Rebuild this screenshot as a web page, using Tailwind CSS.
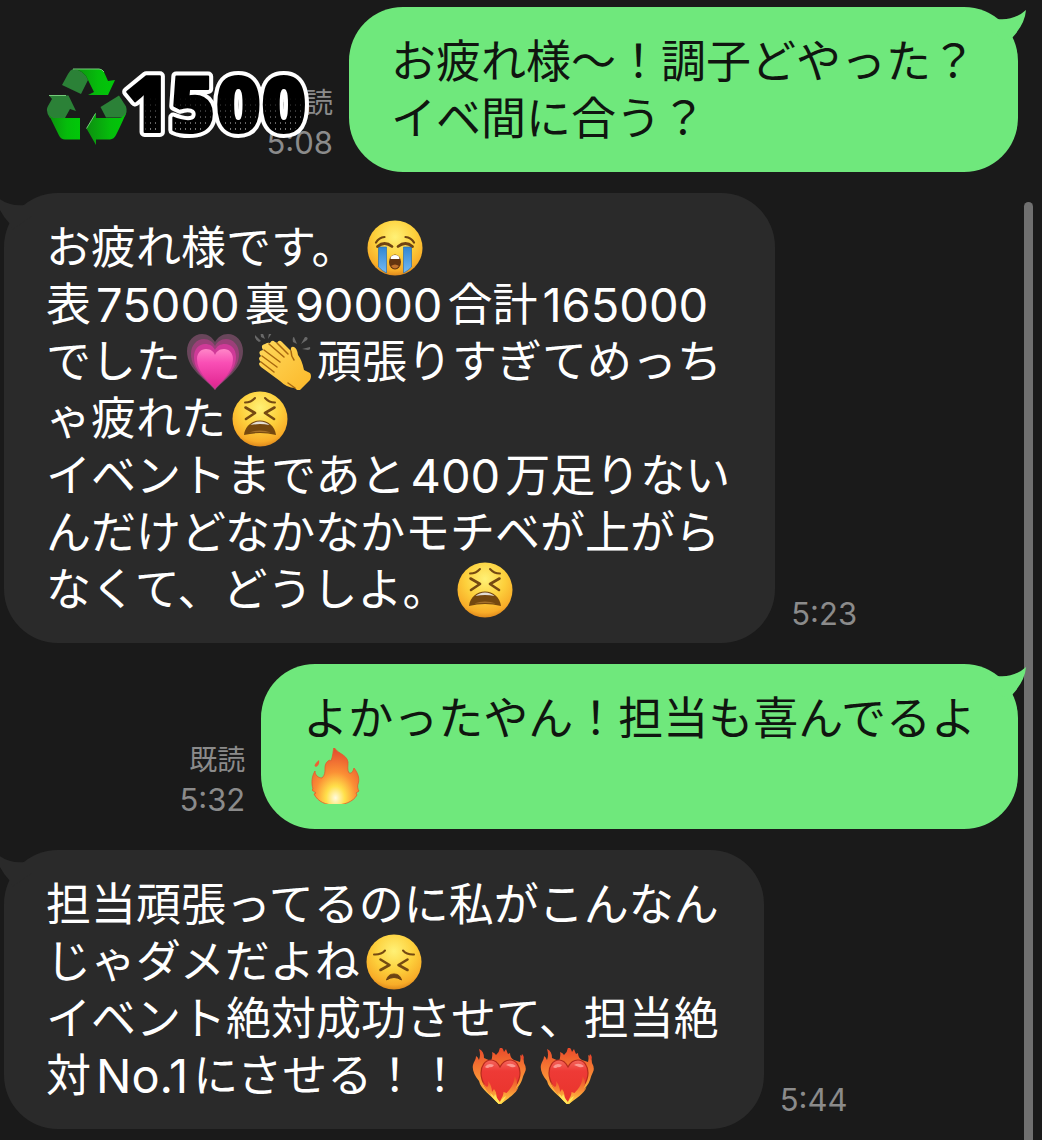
<!DOCTYPE html>
<html lang="ja">
<head>
    <meta charset="UTF-8">
    <meta name="viewport" content="width=device-width, initial-scale=1.0">
    <title>トーク</title>
    <script src="https://cdn.jsdelivr.net/npm/@tailwindcss/browser@4"></script>
</head>
<body class="bg-[#1a1a1a] font-['Inter','Noto_Sans_CJK_JP',sans-serif] overflow-x-hidden">

    <!-- Shared shapes -->
    <svg class="absolute w-0 h-0" aria-hidden="true">
        <defs>
            <radialGradient id="face" cx="50%" cy="30%" r="72%">
                <stop offset="0" stop-color="#fff176"/>
                <stop offset=".5" stop-color="#fdd03c"/>
                <stop offset=".85" stop-color="#f8ac28"/>
                <stop offset="1" stop-color="#d9821a"/>
            </radialGradient>
            <linearGradient id="tear" x1="0" y1="0" x2="0" y2="1">
                <stop offset="0" stop-color="#2f86d2"/>
                <stop offset="1" stop-color="#74b9f2"/>
            </linearGradient>
            <linearGradient id="pink" x1="0" y1="0" x2="0" y2="1">
                <stop offset="0" stop-color="#ff86c8"/>
                <stop offset=".35" stop-color="#f94fb5"/>
                <stop offset="1" stop-color="#e0248f"/>
            </linearGradient>
            <linearGradient id="hand" x1="0" y1="0" x2="1" y2="1">
                <stop offset="0" stop-color="#ffd95c"/>
                <stop offset="1" stop-color="#fbb829"/>
            </linearGradient>
            <radialGradient id="flame" cx="50%" cy="88%" r="80%">
                <stop offset="0" stop-color="#fffbe0"/>
                <stop offset=".25" stop-color="#ffe04a"/>
                <stop offset=".55" stop-color="#fb8f35"/>
                <stop offset="1" stop-color="#e5502f"/>
            </radialGradient>
            <linearGradient id="blaze" x1="0" y1="0" x2="0" y2="1">
                <stop offset="0" stop-color="#e8452a"/>
                <stop offset=".5" stop-color="#f98a35"/>
                <stop offset="1" stop-color="#ffdc45"/>
            </linearGradient>
            <linearGradient id="red" x1="0" y1="0" x2="0" y2="1">
                <stop offset="0" stop-color="#f4665c"/>
                <stop offset=".25" stop-color="#ee3a36"/>
                <stop offset="1" stop-color="#e8332b"/>
            </linearGradient>
            <linearGradient id="leaf" x1="0" y1="0" x2="1" y2="0">
                <stop offset="0" stop-color="#0d8f10"/>
                <stop offset=".6" stop-color="#05bd0b"/>
                <stop offset="1" stop-color="#00c808"/>
            </linearGradient>
            <pattern id="dots" width="5" height="6" patternUnits="userSpaceOnUse">
                <rect width="5" height="6" fill="#000"/>
                <rect x="2" y="2" width="1" height="2" fill="#777"/>
            </pattern>
            <linearGradient id="fade" x1="0" y1="0" x2="0" y2="1">
                <stop offset=".45" stop-color="#000"/>
                <stop offset=".75" stop-color="#000" stop-opacity="0"/>
            </linearGradient>

            <symbol id="cry" viewBox="0 0 56 56">
                <circle cx="28" cy="28" r="27.5" fill="url(#face)"/>
                <path d="M11.5 27h8v26a27 27 0 0 1-8-6zM36.5 27h8v20a27 27 0 0 1-8 6z" fill="url(#tear)" stroke="#2b70b0" stroke-width=".7"/>
                <g fill="none" stroke="#6f4412" stroke-width="2.2" stroke-linecap="round">
                    <path d="M9 22.5q3-5 8.500-5.500M47 22.500q-3-5-8.500-5.500"/>
                    <path d="M10.500 26.500q7-6 14.500 0M31 26.500q7.500-6 14.500 0" stroke-width="2.800"/>
                </g>
                <ellipse cx="28" cy="42" rx="6" ry="7.500" fill="#63340f"/>
                <path d="M23.500 39q0-4 4.500-4t4.500 4z" fill="#fff"/>
                <path d="M24 46q4-3 8 0-4 5-8 0z" fill="#c2722c"/>
            </symbol>

            <symbol id="tired" viewBox="0 0 56 56">
                <circle cx="28" cy="28" r="27.500" fill="url(#face)"/>
                <g fill="none" stroke="#754a12" stroke-width="2" stroke-linecap="round">
                    <path d="M13 11.500q6 0 10-4.500M43 11.500q-6 0-10-4.500"/>
                    <path d="M13.500 16.500l9.500 5.500-9 6M42.500 16.500l-9.500 5.500 9 6" stroke-width="2.600" stroke-linejoin="round"/>
                </g>
                <path d="M12 44c1-9 8-14.500 16-14.500s15 5.500 16 14.500q-16-4-32 0z" fill="#75480f"/>
                <path d="M18.500 34q4-3.500 9.500-3.500t9.500 3.500q-9.500-2-19 0z" fill="#e3ddd4"/>
                <path d="M17 41.500q11-4 22 0-11-1-22 0z" fill="#a5702a"/>
            </symbol>

            <symbol id="persevere" viewBox="0 0 56 56">
                <circle cx="28" cy="28" r="27.500" fill="url(#face)"/>
                <g fill="none" stroke="#754a12" stroke-width="2" stroke-linecap="round">
                    <path d="M8 20.500q7 .5 11-4M48 20.500q-7 .5-11-4"/>
                    <path d="M14.500 25.500l9 5.500-9 5M41.500 25.500l-9 5.500 9 5" stroke-width="2.600" stroke-linejoin="round"/>
                </g>
                <path d="M20.500 46q1.500-6 7.500-6t7.500 6q-7.500-5-15 0z" fill="#6d4213" stroke="#6d4213" stroke-linejoin="round"/>
            </symbol>

            <symbol id="heart" viewBox="0 0 56 56" overflow="visible">
                <path d="M28 56C20 46 0 36 0 17 0 7 7 0 15 0c6 0 10 3 13 8 3-5 7-8 13-8 8 0 15 7 15 17 0 19-20 29-28 39z" fill="#69465b"/>
                <path d="M28 56C20 46 4 36 4 20 4 11 10 5 17 5c5 0 9 3 11 7 2-4 6-7 11-7 7 0 13 6 13 15 0 16-16 26-24 36z" fill="#9c3f79"/>
                <path d="M28 55C20 46 7 37 7 23c0-8 5-13 11-13 5 0 8 2 10 6 2-4 5-6 10-6 6 0 11 5 11 13 0 14-13 23-21 32z" fill="#cf3a98"/>
                <path d="M28 54C21 46 10 38 10 25c0-6 4-10 9-10s8 3 9 6c1-3 4-6 9-6s9 4 9 10c0 13-11 21-18 29z" fill="url(#pink)"/>
            </symbol>

            <symbol id="clap" viewBox="0 0 56 56" overflow="visible">
                <g fill="#696969">
                    <path d="M7-3l3 8-4-2q-1-5 1-6zM0 1l6 6-2 1q-5-3-4-7zM17-1l-4 6 1-6q2-2 3 0zM39 3l3 7-4-2q-1-5 1-5zM50 3q4 0 2 3l-6 4zM55 13q1 3-2 3l-6-1z"/>
                </g>
                <path d="M15 9q2-4 5-1l2 1q2-4 5-1l9 9q-1-5 3-4 3 1 4 8 4 5 6 15l6 3q2 3 0 7l-10 10q-3 1-5-2-8 0-15-7L6 33q-4-4 0-5-4-4 0-6-4-5 2-6-3-5 2-6 3-2 5-1z" fill="url(#hand)"/>
                <path d="M6 28l13 10M7 22l15 11M9 16l16 12M14 10l15 13M22 9l11 11M36 17q0 5 3 9M33 49l7 5" fill="none" stroke="#a9680f" stroke-width="1.500" stroke-linecap="round"/>
            </symbol>

            <symbol id="fire" viewBox="0 0 56 56" overflow="visible">
                <path d="M10 12q1 5-3 7-4-1 3-7z" fill="#ee5f32"/>
                <path d="M25-2c1 7 13 8 14 16 0 4-1 8 1 11 3 1 4-2 5-5 4 5 6 11 4 16-1 2 0 6 1 7l-3 2 1 2C44 54 35 57 26 57S9 54 5 46l2-1-4-3 1-1C2 34 3 28 6 23c0 4 3 7 7 7 6-6 0-12 6-17 1-1 2-1 3 0 2-5 2-10 3-15z" fill="url(#flame)" stroke="#e35a2c" stroke-width=".8"/>
            </symbol>

            <symbol id="burning" viewBox="0 0 56 56" overflow="visible">
                <path d="M28 57C20 48 9 42 7 33 2 27 0 21 1 17c1-4 3-5 3-9q2 1 3 4 2-5 0-11 5 2 5 9l7 3q2-5 1-9 3 1 4 3 4-3 4-9 3 2 4 6l2-3q1 3 2 5l2-1q0 5 4 7l6 2q1-4 0-7 4 2 4 8 3 5 1 9-2 4-3 8c-3 9-14 17-22 25z" fill="url(#blaze)"/>
                <path d="M27.500 56C21 47 9 38 9 25c0-7 4-13 10-13 5 0 7 3 9 7 2-4 5-7 10-7 6 0 10 6 10 13 0 13-13 22-20.500 31z" fill="url(#red)" stroke="#b72a1d" stroke-width="1.200"/>
                <path d="M13 19q3-5 9-2-2 3-4 2-3 2-5 0zM34 17q5-3 10 1-2 2-5 1z" fill="#ffb0a8" opacity=".75"/>
                <path d="M27.500 57C21 50 13 43 11 34q2 4 4 5 2-1 1-6 4 5 4 11l2-3q4 5 2 10 3 1 4 3zM27.500 57c0-5 4-8 4-13l3 1c5-5 8-10 8-17 4 5 2 11 1 14l3-3c-2 7-13 13-19 18z" fill="url(#blaze)"/>
                <path d="M27 56q-7-6-9-11 3 2 4 4l1-3q2 4 5 9 1-4 6-7-2 5-7 8z" fill="#ffe65a"/>
                <path d="M50 6q3 3 1 6-3-2-1-6z" fill="#ec4a2d"/>
            </symbol>

            <!-- Bubble tail, pointing up and to the right -->
            <symbol id="tail" viewBox="0 0 36 36">
                <path d="M0 8l7 1Q24 11 36 0 35 14 22 28L20 34 0 20z" fill="currentColor"/>
            </symbol>
        </defs>
    </svg>

    <main class="relative min-h-screen pt-[7px] pb-[11px]">
        <ol class="flex flex-col gap-[21px]">

            <li class="flex justify-end items-end gap-4 pr-6">
                <div class="pb-[10px] text-right text-[#8b8b8b] leading-[39px]">
                    <div class="text-[28px]">既読</div>
                    <time class="block text-[31px]">5:08</time>
                </div>
                <div class="relative bg-[#6fe87c] text-[#101510] rounded-[54px] pt-[26px] pb-[25px] px-[42px] text-[45px] leading-[57px] whitespace-nowrap">
                    <svg class="absolute -right-2 top-[3px] size-9 text-[#6fe87c]"><use href="#tail"/></svg>
                    <p>お疲れ様〜！調子どやった？</p>
                    <p>イベ間に合う？</p>
                </div>
            </li>

            <li class="flex items-end gap-4 pl-1">
                <div class="relative bg-[#2a2a2a] text-white rounded-[54px] pt-[26px] pb-[25px] pl-[42px] pr-[45px] text-[45px] leading-[57px] whitespace-nowrap">
                    <svg class="absolute -left-2 top-[3px] size-9 -scale-x-100 text-[#2a2a2a]"><use href="#tail"/></svg>
                    <p class="flex items-center h-[57px]">お疲れ様です。<svg class="size-14 ml-[10px]" role="img" aria-label="大泣き"><use href="#cry"/></svg></p>
                    <p class="flex items-center h-[57px]">表<span class="mx-[5px] text-[47px]">75000</span>裏<span class="mx-[5px] text-[47px]">90000</span>合計<span class="mx-[5px] text-[47px]">165000</span></p>
                    <p class="flex items-center h-[57px]">でした<svg class="size-14 mx-[6px]" role="img" aria-label="ハート"><use href="#heart"/></svg><svg class="size-14 mx-[6px]" role="img" aria-label="拍手"><use href="#clap"/></svg>頑張りすぎてめっち</p>
                    <p class="flex items-center h-[57px]">ゃ疲れた<svg class="size-14 mx-[6px]" role="img" aria-label="疲れた顔"><use href="#tired"/></svg></p>
                    <p class="flex items-center h-[57px]">イベントまであと<span class="mx-[5px] text-[47px]">400</span>万足りない</p>
                    <p class="flex items-center h-[57px]">んだけどなかなかモチベが上がら</p>
                    <p class="flex items-center h-[57px]">なくて、どうしよ。<svg class="size-14 ml-[10px]" role="img" aria-label="疲れた顔"><use href="#tired"/></svg></p>
                </div>
                <time class="pb-[10px] text-[31px] leading-[39px] text-[#8b8b8b]">5:23</time>
            </li>

            <li class="flex justify-end items-end gap-4 pr-6">
                <div class="pb-[10px] text-right text-[#8b8b8b] leading-[39px]">
                    <div class="text-[28px]">既読</div>
                    <time class="block text-[31px]">5:32</time>
                </div>
                <div class="relative z-10 bg-[#6fe87c] text-[#101510] rounded-[54px] pt-[26px] pb-[25px] px-[42px] text-[45px] leading-[57px] whitespace-nowrap">
                    <svg class="absolute -right-2 top-[3px] size-9 text-[#6fe87c]"><use href="#tail"/></svg>
                    <p>よかったやん！担当も喜んでるよ</p>
                    <p class="flex items-center h-[57px]"><svg class="size-14 mx-[6px]" role="img" aria-label="炎"><use href="#fire"/></svg></p>
                </div>
            </li>

            <li class="flex items-end gap-4 pl-1">
                <div class="relative bg-[#2a2a2a] text-white rounded-[54px] pt-[26px] pb-[25px] pl-[42px] pr-[45px] text-[45px] leading-[57px] whitespace-nowrap">
                    <svg class="absolute -left-2 top-[3px] size-9 -scale-x-100 text-[#2a2a2a]"><use href="#tail"/></svg>
                    <p>担当頑張ってるのに私がこんなん</p>
                    <p class="flex items-center h-[57px]">じゃダメだよね<svg class="size-14 mx-[6px]" role="img" aria-label="つらい顔"><use href="#persevere"/></svg></p>
                    <p>イベント絶対成功させて、担当絶</p>
                    <p class="flex items-center h-[57px]">対<span class="mx-[5px] text-[47px]">No.1</span>にさせる！！<svg class="size-14 ml-[10px] mr-[6px]" role="img" aria-label="燃えるハート"><use href="#burning"/></svg><svg class="size-14 mx-[6px]" role="img" aria-label="燃えるハート"><use href="#burning"/></svg></p>
                </div>
                <time class="pb-[10px] text-[31px] leading-[39px] text-[#8b8b8b]">5:44</time>
            </li>
        </ol>

        <!-- Sticker over the first message -->
        <div class="absolute left-[46px] top-[66px] flex">
            <svg class="w-[82px] h-[82px]" viewBox="0 0 82 82" role="img" aria-label="リサイクル">
                <g fill="#2b8137">
                    <path d="M27 3Q24 4 22 8l-6 11 19 9 7-14Q38 4 27 3z"/>
                    <path d="M3 29.500h19.500L30 45l-6-2-5 9H4Q-1 45 2 40l4-7z"/>
                    <path d="M54.500 41L73 29.500l7 11q2 6-2 11H60z"/>
                </g>
                <g fill="url(#leaf)">
                    <path d="M27 3h26q3 0 5 3l4 9 7-1-7 15H42l6-3-6-12Q38 4 27 3z"/>
                    <path d="M1.500 46q2 5 6 6H34v21.500H19q-4 0-6-4z"/>
                    <path d="M40.500 62.500L50 46.500V52h24q4-1 6-6-1 5-10 23-2 4-6 4.500H50V79z"/>
                </g>
                <path d="M27 3h26q3 0 5 3M3 29.500h17M40.500 62.500l9-15" fill="none" stroke="#74c97a"/>
            </svg>
            <svg class="w-[180px] h-[82px] overflow-visible" viewBox="0 0 180 82">
                <g class="font-['Open_Sans',sans-serif] font-extrabold text-[78px]" stroke-linejoin="round">
                    <text x="-4" y="66" fill="url(#dots)" stroke="#fff" stroke-width="10" paint-order="stroke">1500</text>
                    <text x="-4" y="66" fill="url(#fade)" stroke="#000" stroke-width="2" aria-hidden="true">1500</text>
                </g>
            </svg>
        </div>

        <!-- Scroll indicator -->
        <div class="absolute right-[9px] top-[202px] bottom-0 w-[9px] rounded-t-full bg-[#707070]"></div>
    </main>

</body>
</html>
